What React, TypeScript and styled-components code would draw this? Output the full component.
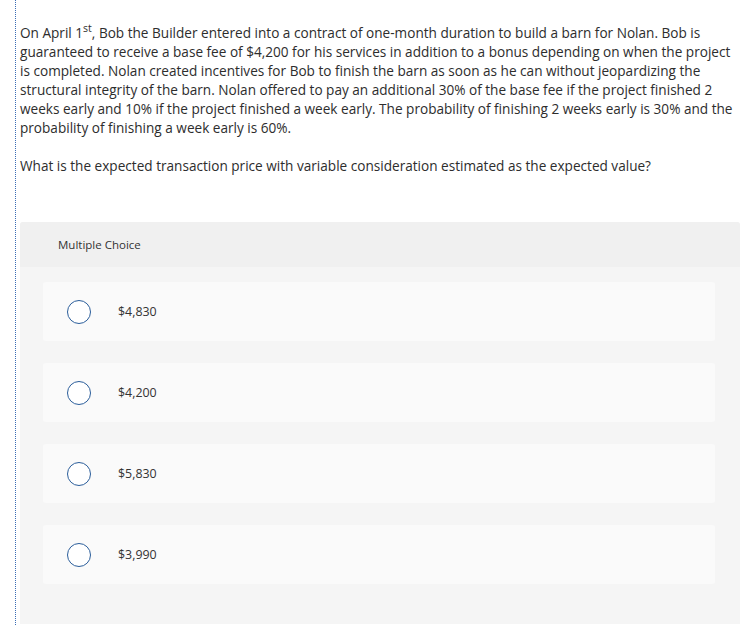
import { createGlobalStyle } from "styled-components"
import styled from "styled-components"

const GlobalStyle = createGlobalStyle`
  html, body {
    margin: 0;
    padding: 0;
    background: #ffffff;
  }
  body {
    font-family: "Open Sans", Lato, sans-serif;
    color: #333333;
  }
`

const Page = styled.div`
  margin-left: 15px;
  min-height: 625px;
  border-left: 1px dotted #3a6db5;
  padding: 23px 10px 0 4px;
  box-sizing: border-box;
`

const Prompt = styled.p`
  margin: 0;
  font-size: 13.6px;
  line-height: 19px;
  color: #2d2d2d;

  sup {
    font-size: 10.5px;
    vertical-align: 6px;
    line-height: 0;
  }
`

const Question = styled.p`
  margin: 19px 0 0;
  font-size: 13.6px;
  line-height: 19px;
  color: #2d2d2d;
`

const Panel = styled.section`
  margin-top: 47px;
  background: #f5f5f5;
  border-radius: 3px 3px 0 0;
  padding-bottom: 40px;
`

const PanelHeader = styled.div`
  height: 45px;
  background: #f0f0f0;
  border-radius: 3px 3px 0 0;
  display: flex;
  align-items: center;
  padding-left: 38px;
  font-size: 11.5px;
  color: #333;
`

const Options = styled.div`
  display: flex;
  flex-direction: column;
  gap: 22px;
  padding: 15px 25px 0 23px;
`

const Option = styled.label`
  height: 59px;
  background: #fafafa;
  border-radius: 3px;
  display: flex;
  align-items: center;
  padding-left: 24px;
  cursor: pointer;
`

const Radio = styled.span`
  width: 22px;
  height: 22px;
  border-radius: 50%;
  border: 1.5px solid #2a5d9a;
  background: #ffffff;
  flex-shrink: 0;
`

const OptionText = styled.span`
  margin-left: 27px;
  font-size: 12.4px;
  color: #333;
`

const choices = ["$4,830", "$4,200", "$5,830", "$3,990"]

export default function App() {
  return (
    <>
      <GlobalStyle />
      <Page>
        <Prompt>
          On April 1<sup>st</sup>, Bob the Builder entered into a contract of
          one-month duration to build a barn for Nolan. Bob is guaranteed to
          receive a base fee of $4,200 for his services in addition to a bonus
          depending on when the project is completed. Nolan created incentives
          for Bob to finish the barn as soon as he can without jeopardizing the
          structural integrity of the barn. Nolan offered to pay an additional
          30% of the base fee if the project finished 2 weeks early and 10% if
          the project finished a week early. The probability of finishing 2
          weeks early is 30% and the probability of finishing a week early is
          60%.
        </Prompt>
        <Question>
          What is the expected transaction price with variable consideration
          estimated as the expected value?
        </Question>
        <Panel>
          <PanelHeader>Multiple Choice</PanelHeader>
          <Options>
            {choices.map((c) => (
              <Option key={c}>
                <Radio />
                <OptionText>{c}</OptionText>
              </Option>
            ))}
          </Options>
        </Panel>
      </Page>
    </>
  )
}
